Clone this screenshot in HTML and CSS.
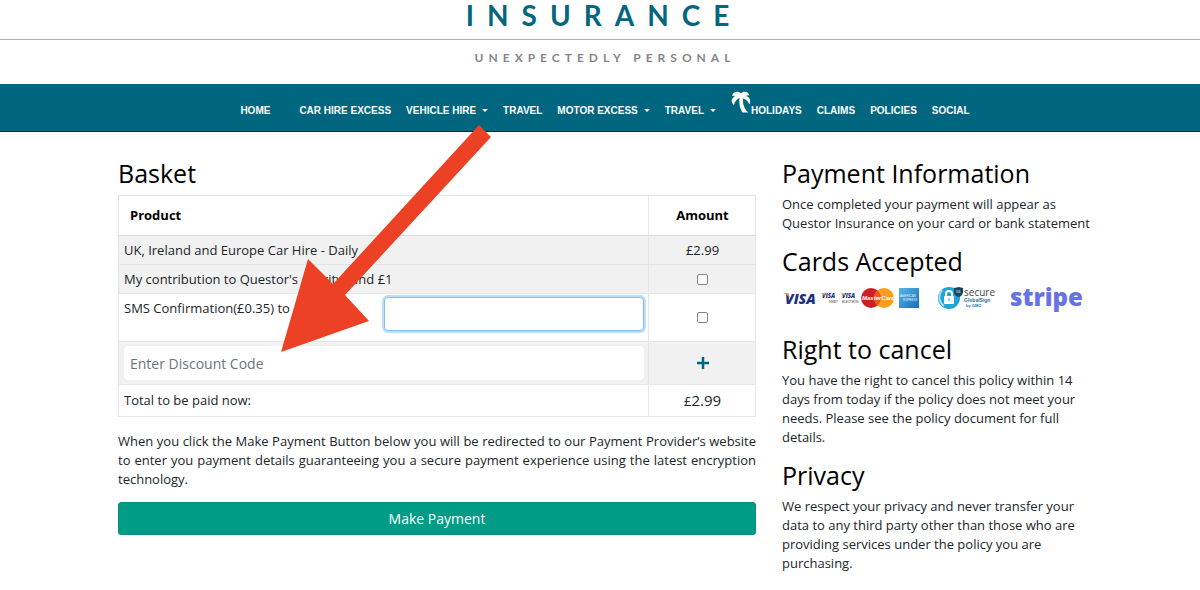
FILE: index.html
```html
<!DOCTYPE html>
<html lang="en">
<head>
<meta charset="utf-8">
<title>Basket - Questor Insurance</title>
<link rel="stylesheet" href="styles.css">
</head>
<body>
<header>
  <div class="brand">INSURANCE</div>
  <div class="tagline">UNEXPECTEDLY PERSONAL</div>
</header>
<nav class="nav">
  <a class="home" href="#">HOME</a>
  <a href="#">CAR HIRE EXCESS</a>
  <a class="drop" href="#">VEHICLE HIRE</a>
  <a href="#">TRAVEL</a>
  <a class="drop" href="#">MOTOR EXCESS</a>
  <a class="drop" href="#">TRAVEL</a>
  <a class="holidays" href="#"><svg class="palm" viewBox="0 0 20 22" aria-hidden="true"><path d="M8.500 7C6 8 4 10 3 14C-0.500 11 0 7 4 5.500C2.500 4.500 2 4.500 1 5C2 0 8 0 10 2.500C12 0 17 0 18.500 4.500C17 4 16 4.300 15 5C19 6 20 10 18.500 13.500C17 10 15 8 12 7.500C11.500 12 13 18 17.500 21.500H11.500C8.500 17 8 12 8.500 7Z"/></svg>HOLIDAYS</a>
  <a href="#">CLAIMS</a>
  <a href="#">POLICIES</a>
  <a href="#">SOCIAL</a>
</nav>
<main class="page">
  <section class="basket">
    <h2>Basket</h2>
    <table>
      <thead><tr><th class="product">Product</th><th class="amount">Amount</th></tr></thead>
      <tbody>
        <tr class="shade"><td>UK, Ireland and Europe Car Hire - Daily</td><td class="amount">£2.99</td></tr>
        <tr class="shade"><td><label for="charity">My contribution to Questor's charity fund £1</label></td><td class="amount"><input type="checkbox" id="charity"></td></tr>
        <tr class="sms"><td><div class="split"><label for="phone">SMS Confirmation(£0.35) to</label><input class="field focus" type="tel" id="phone"></div></td><td class="amount"><input type="checkbox" aria-label="Add SMS confirmation"></td></tr>
        <tr class="shade code"><td><input class="field" type="text" placeholder="Enter Discount Code" aria-label="Discount code"></td><td class="amount"><button class="add" type="button" aria-label="Apply discount code"><svg viewBox="0 0 12 12"><path d="M6 0V12M0 6H12"/></svg></button></td></tr>
        <tr class="total"><td>Total to be paid now:</td><td class="amount">£<span class="sum">2.99</span></td></tr>
      </tbody>
    </table>
    <p class="note">When you click the Make Payment Button below you will be redirected to our Payment Provider’s website to enter you payment details guaranteeing you a secure payment experience using the latest encryption technology.</p>
    <button class="pay" type="button">Make Payment</button>
  </section>
  <aside>
    <h2>Payment Information</h2>
    <p>Once completed your payment will appear as Questor Insurance on your card or bank statement</p>
    <h2>Cards Accepted</h2>
    <svg class="cards" viewBox="0 0 304 38" role="img" aria-label="Accepted cards">
      <g class="visa">
        <text x="3" y="21" font-size="14">VISA</text>
        <text x="40" y="15" font-size="6">VISA</text>
        <text x="60" y="15" font-size="6">VISA</text>
      </g>
      <path d="M1 10H6L8 15Q5 11 1 10ZM39 10H42L43 13ZM59 10H62L63 13Z" fill="#f3a024"/>
      <g class="sub"><text x="47" y="20" font-size="3">DEBIT</text><text x="60" y="20" font-size="3">ELECTRON</text></g>
      <circle cx="89" cy="15" r="10" fill="#cf1f26"/><circle cx="102" cy="15" r="10" fill="#f89c1c"/>
      <path d="M95.500 7.500A10 10 0 0 1 95.500 22.500A10 10 0 0 1 95.500 7.500" fill="#e85b20"/>
      <text class="mc" x="80" y="17" font-size="6">MasterCard</text>
      <defs><linearGradient id="amex" x2="1" y2="1"><stop stop-color="#58b6e6"/><stop offset="1" stop-color="#176fb9"/></linearGradient></defs>
      <rect x="117" y="5" width="20" height="20" fill="url(#amex)"/>
      <g class="am"><text x="118" y="14" font-size="3">AMERICAN</text><text x="121" y="18" font-size="3">EXPRESS</text></g>
      <circle cx="167" cy="15" r="11" fill="#20a5d5"/><path d="M160 7A11 11 0 0 0 162 23" fill="none" stroke="#a5ddf0" stroke-width="2"/>
      <rect x="162" y="13" width="10" height="8" rx="1" fill="#fff"/><path d="M164 14V11A3 3 0 0 1 170 11V14" fill="none" stroke="#fff" stroke-width="2"/><path d="M167 15V18" stroke="#20a5d5"/>
      <path d="M172 5L177 4L181 5V10Q180 13 177 14Q173 13 172 10Z" fill="#17455f"/><text x="174" y="10" font-size="3" fill="#fff">SSL</text>
      <text class="secure" x="182" y="13" font-size="10">secure</text>
      <g class="gs"><text x="182" y="19" font-size="5">GlobalSign</text><text x="184" y="24" font-size="4">by GMO</text></g>
      <text class="stripe" x="228" y="23" font-size="24">stripe</text>
    </svg>
    <h2>Right to cancel</h2>
    <p>You have the right to cancel this policy within 14 days from today if the policy does not meet your needs. Please see the policy document for full details.</p>
    <h2>Privacy</h2>
    <p>We respect your privacy and never transfer your data to any third party other than those who are providing services under the policy you are purchasing.</p>
  </aside>
</main>
<svg class="arrow" viewBox="0 0 210 227" aria-hidden="true"><path d="M0 227L27 134L52 159L198 0L210 12L64 170L88 196Z"/></svg>
</body>
</html>
```
FILE: styles.css
```css
* { box-sizing: border-box; }
body {
  margin: 0;
  position: relative;
  background: #fff;
  color: #212529;
  font: 13px/19px "Open Sans", sans-serif;
}
header { height: 84px; text-align: center; }
.brand {
  height: 40px;
  border-bottom: 1px solid #7fc4c6;
  color: #05677f;
  font: bold 28px/30px Lato, sans-serif;
  letter-spacing: 13px;
  padding-left: 8px;
}
.tagline {
  color: #85858d;
  font: bold 12px/36px Lato, sans-serif;
  letter-spacing: 5px;
  padding-left: 10px;
}
.nav {
  display: flex;
  justify-content: center;
  align-items: center;
  gap: 15px;
  height: 48px;
  padding: 7px 0 0 10px;
  background: #00657f;
  border-bottom: 1px solid #06263f;
}
.nav a {
  color: #fff;
  font: bold 10px/16px "Liberation Sans", Arial, sans-serif;
  text-decoration: none;
  white-space: nowrap;
}
.home { margin-right: 14px; }
.drop::after {
  content: "";
  display: inline-block;
  margin-left: 6px;
  vertical-align: 2px;
  border: 3px solid transparent;
  border-top-color: #fff;
  border-bottom: 0;
}
.holidays { display: flex; }
.palm { width: 20px; height: 22px; margin-top: -12px; fill: #fff; }
.page {
  display: grid;
  grid-template-columns: 2fr 1fr;
  gap: 26px;
  padding: 26px 99px 0 118px;
}
h2 {
  margin: 0 0 7px;
  color: #000;
  font-size: 25px;
  font-weight: 400;
  line-height: 30px;
}
p { margin: 0 0 13px; }
aside p { padding-right: 4px; }
table {
  width: 100%;
  border-collapse: collapse;
  table-layout: fixed;
}
th, td {
  height: 29px;
  padding: 4px 4px 4px 5px;
  border: 1px solid #e4e6e8;
  text-align: left;
}
th { height: 40px; color: #000; border-bottom-color: #d9dce0; }
.product { padding-left: 11px; }
.amount { width: 107px; text-align: center; }
.shade { background: #f1f1f1; }
.sms td { height: 48px; padding-top: 3px; padding-bottom: 3px; }
.sms td:first-child { vertical-align: top; }
.code td { height: 43px; }
.total td { height: 32px; }
.sum { font-size: 15px; }
.split { display: grid; grid-template-columns: 1fr 1fr; }
.split label { padding-top: 2px; }
input[type="checkbox"] {
  display: block;
  width: 11px;
  height: 11px;
  margin: 0 auto;
  appearance: none;
  background: #fff;
  border: 1px solid #858585;
  border-radius: 2px;
}
.field {
  display: block;
  width: 100%;
  height: 34px;
  padding: 0 5px;
  border: 1px solid #fff;
  border-radius: 4px;
  background: #fff;
  font: 14px/20px "Open Sans", sans-serif;
}
.field::placeholder { color: #6c757d; opacity: 1; }
.focus { border-color: #80bdff; box-shadow: 0 0 0 2px #bfdefd; }
.add { display: block; margin: 0 auto; padding: 0; border: 0; background: none; }
.add svg { display: block; width: 12px; height: 12px; stroke: #00657f; stroke-width: 2.5; }
.note { margin: 15px 0 13px; text-align: justify; }
.pay {
  display: block;
  width: 100%;
  height: 33px;
  border: 1px solid #078d78;
  border-radius: 3px;
  background: #009c86;
  color: #fff;
  font: 14px/20px "Open Sans", sans-serif;
}
.cards { display: block; width: 304px; height: 38px; margin-bottom: 13px; overflow: visible; }
.visa { fill: #1b2f83; font-family: "Open Sans"; font-weight: 800; font-style: italic; }
.sub { fill: #333; font-family: "Liberation Sans"; }
.mc { fill: #fff; font-family: "Liberation Sans"; font-weight: bold; font-style: italic; }
.am { fill: #e5f4ff; font-family: "Liberation Sans"; }
.secure { fill: #444; font-family: "Open Sans"; }
.gs { fill: #1677a7; font-family: "Liberation Sans"; font-weight: bold; }
.stripe { fill: #6772e5; font-family: "Open Sans"; font-weight: 800; }
.arrow {
  position: absolute;
  left: 281px;
  top: 125px;
  width: 210px;
  height: 227px;
  fill: #ed4126;
  pointer-events: none;
}
```
